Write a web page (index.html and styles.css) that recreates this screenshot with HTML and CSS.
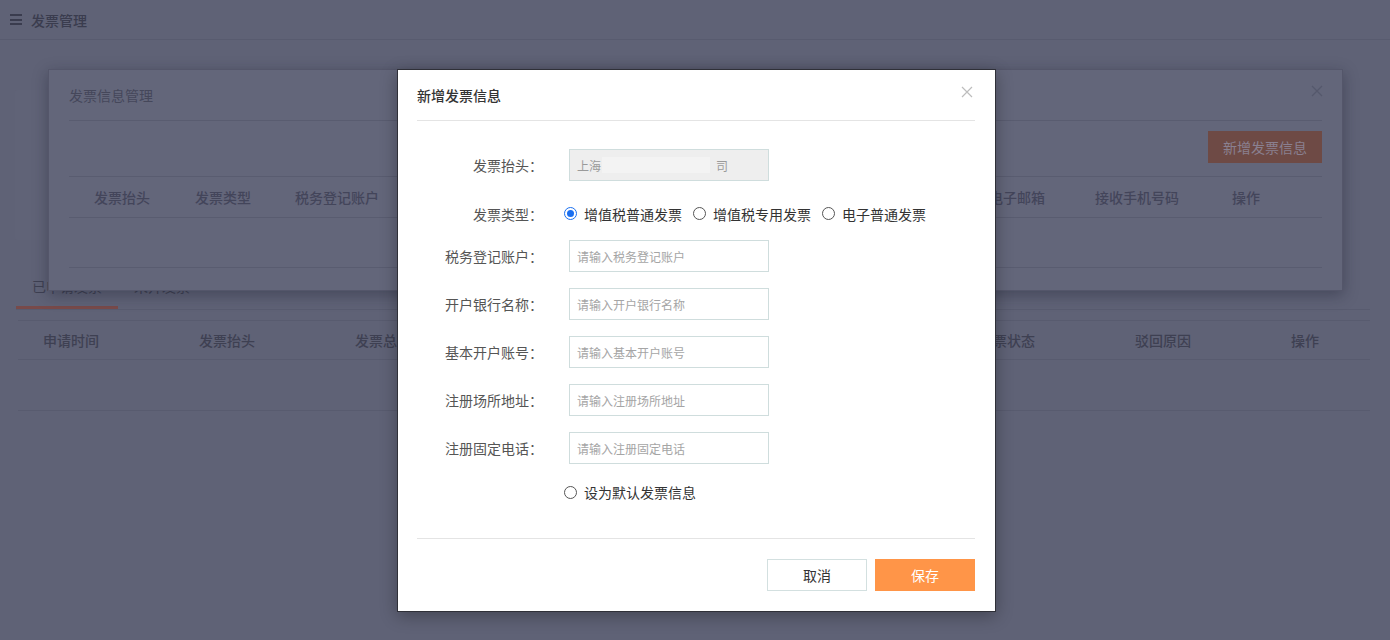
FILE: index.html
```html
<!DOCTYPE html>
<html lang="zh-CN">
<head>
    <meta charset="UTF-8">
    <title>发票管理</title>
    <link rel="stylesheet" href="styles.css">
</head>
<body>
    <div class="topbar">
        <span class="menu-icon"><i></i><i></i><i></i></span>
        <span class="topbar-title">发票管理</span>
    </div>

    <div class="main">
        <div class="summary-card"></div>

        <div class="tabs">
            <div class="tab active">已申请发票</div>
            <div class="tab">未开发票</div>
        </div>

        <div class="list">
            <div class="list-head">
                <div>申请时间</div>
                <div>发票抬头</div>
                <div>发票总额</div>
                <div>发票类型</div>
                <div>收票方式</div>
                <div>申请人</div>
                <div>发票状态</div>
                <div>驳回原因</div>
                <div>操作</div>
            </div>
            <div class="list-empty"></div>
        </div>
    </div>

    <!-- 发票信息管理 弹窗 -->
    <div class="info-dialog">
        <div class="info-head">
            <span>发票信息管理</span>
            <svg class="info-close" width="12" height="12" viewBox="0 0 12 12"><path d="M1 1L11 11M11 1L1 11" stroke="currentColor" stroke-width="1.2"/></svg>
        </div>
        <div class="info-tools">
            <button class="info-add">新增发票信息</button>
        </div>
        <div class="info-table">
            <div class="info-row info-row-head">
                <div class="c1">发票抬头</div>
                <div class="c2">发票类型</div>
                <div class="c3">税务登记账户</div>
                <div class="c4">开户银行名称</div>
                <div class="c5">基本开户账号</div>
                <div class="c6">注册场所地址</div>
                <div class="c7">接收电子邮箱</div>
                <div class="c8">接收手机号码</div>
                <div class="c9">操作</div>
            </div>
            <div class="info-row info-row-empty"></div>
        </div>
    </div>

    <!-- 新增发票信息 弹窗 -->
    <div class="dialog">
        <div class="dialog-head">
            <span class="dialog-title">新增发票信息</span>
            <svg class="dialog-close" width="12" height="12" viewBox="0 0 12 12"><path d="M1 1L11 11M11 1L1 11" stroke="currentColor" stroke-width="1.2"/></svg>
        </div>

        <div class="form">
            <div class="form-row">
                <label class="form-label">发票抬头：</label>
                <div class="input disabled">上海<span class="masked"></span>司</div>
            </div>
            <div class="form-row radio-row">
                <label class="form-label">发票类型：</label>
                <div class="radios">
                    <span class="radio checked"></span><span class="radio-text">增值税普通发票</span>
                    <span class="radio"></span><span class="radio-text">增值税专用发票</span>
                    <span class="radio"></span><span class="radio-text">电子普通发票</span>
                </div>
            </div>
            <div class="form-row">
                <label class="form-label">税务登记账户：</label>
                <input class="input" type="text" placeholder="请输入税务登记账户">
            </div>
            <div class="form-row">
                <label class="form-label">开户银行名称：</label>
                <input class="input" type="text" placeholder="请输入开户银行名称">
            </div>
            <div class="form-row">
                <label class="form-label">基本开户账号：</label>
                <input class="input" type="text" placeholder="请输入基本开户账号">
            </div>
            <div class="form-row">
                <label class="form-label">注册场所地址：</label>
                <input class="input" type="text" placeholder="请输入注册场所地址">
            </div>
            <div class="form-row">
                <label class="form-label">注册固定电话：</label>
                <input class="input" type="text" placeholder="请输入注册固定电话">
            </div>
            <div class="form-row default-row">
                <span class="radio"></span><span class="radio-text">设为默认发票信息</span>
            </div>
        </div>

        <div class="dialog-foot">
            <button class="btn btn-cancel">取消</button>
            <button class="btn btn-save">保存</button>
        </div>
    </div>
</body>
</html>
```

FILE: styles.css
```css
* {
    box-sizing: border-box;
}

body {
    margin: 0;
    height: 640px;
    overflow: hidden;
    background-color: #5f6276;
    font-family: "Noto Sans CJK SC", "Liberation Sans", sans-serif;
    font-size: 14px;
    color: #3e4052;
    position: relative;
}

/* ---- page behind the mask ---- */

.topbar {
    display: flex;
    align-items: center;
    height: 40px;
    padding: 0 10px;
    border-bottom: 1px solid #585b6f;
}

.menu-icon {
    display: flex;
    flex-direction: column;
    justify-content: space-between;
    width: 12px;
    height: 11px;
    margin-right: 9px;
}

.menu-icon i {
    display: block;
    height: 2px;
    background-color: #3a3c4e;
}

.topbar-title {
    color: #3a3c4e;
    font-weight: 500;
}

.main {
    padding: 50px 20px 0 15px;
}

.summary-card {
    height: 150px;
    margin-right: 40px;
    background-color: #606377;
    border-radius: 3px;
}

.tabs {
    display: flex;
    margin-top: 26px;
    margin-left: 1px;
    border-bottom: 1px solid #585b6f;
}

.tab {
    padding: 0 16px;
    line-height: 40px;
    border-bottom: 3px solid transparent;
    color: #3e4052;
}

.tab.active {
    border-bottom-color: #784a4a;
}

.list {
    margin: 10px 0 0 3px;
}

.list-head {
    display: grid;
    grid-template-columns: repeat(8, 156px) 1fr;
    height: 40px;
    align-items: center;
    border-top: 1px solid #585b6f;
    border-bottom: 1px solid #585b6f;
    font-weight: 500;
}

.list-head div {
    padding-left: 25px;
    white-space: nowrap;
}

.list-empty {
    height: 51px;
    border-bottom: 1px solid #585b6f;
}

/* ---- 发票信息管理 ---- */

.info-dialog {
    position: absolute;
    left: 48px;
    top: 69px;
    width: 1295px;
    height: 222px;
    padding: 0 20px;
    background-color: #63667a;
    border: 1px solid #54566a;
    box-shadow: 0 4px 14px rgba(20, 22, 40, 0.35);
}

.info-head {
    display: flex;
    justify-content: space-between;
    align-items: center;
    height: 51px;
    border-bottom: 1px solid #595c70;
    color: #45475a;
}

.info-close {
    color: #55586c;
    margin-right: -1px;
    margin-top: -8px;
}

.info-tools {
    display: flex;
    justify-content: flex-end;
    padding: 10px 0 13px;
}

.info-add {
    width: 114px;
    height: 32px;
    border: none;
    background-color: #6e4a45;
    color: #8a8090;
    font-family: inherit;
    font-size: 14px;
}

.info-row {
    display: flex;
    align-items: center;
    border-top: 1px solid #595c70;
}

.info-row-head {
    height: 41px;
    font-weight: 500;
    color: #43455a;
}

.info-row-empty {
    height: 51px;
    border-bottom: 1px solid #595c70;
}

.info-row div {
    text-align: center;
    white-space: nowrap;
    flex-shrink: 0;
}

.c1 { width: 106px; }
.c2 { width: 96px; }
.c3 { width: 132px; }
.c4 { width: 178px; }
.c5 { width: 178px; }
.c6 { width: 179px; }
.c7 { width: 130px; }
.c8 { width: 138px; }
.c9 { width: 80px; }

/* ---- 新增发票信息 ---- */

.dialog {
    position: absolute;
    left: 397px;
    top: 69px;
    width: 599px;
    height: 543px;
    padding: 0 20px 20px 19px;
    background-color: #fff;
    border: 1px solid #2f3038;
    box-shadow: 0 4px 16px rgba(0, 0, 0, 0.3);
    display: flex;
    flex-direction: column;
}

.dialog-head {
    display: flex;
    justify-content: space-between;
    align-items: center;
    height: 51px;
    border-bottom: 1px solid #e4e4e4;
}

.dialog-title {
    color: #333;
    font-weight: 500;
}

.dialog-close {
    color: #bdbdbd;
    margin-top: -7px;
    margin-right: 2px;
}

.form {
    padding-top: 28px;
    padding-bottom: 34px;
    border-bottom: 1px solid #e4e4e4;
}

.form-row {
    display: flex;
    align-items: center;
    height: 32px;
    margin-bottom: 16px;
}

.form-label {
    width: 126px;
    margin-right: 26px;
    text-align: right;
    color: #555;
    white-space: nowrap;
}

.input {
    width: 200px;
    height: 32px;
    padding: 0 7px;
    border: 1px solid #cfdddd;
    font-family: inherit;
    font-size: 12px;
    color: #333;
    outline: none;
}

.input::placeholder {
    color: #a5a5a5;
}

.input.disabled {
    display: flex;
    align-items: center;
    background-color: #eeeeee;
    color: #9a9a9a;
}

.masked {
    width: 108px;
    height: 16px;
    margin: 0 6px 0 1px;
    background-color: #f3f3f3;
}

.radio-row {
    height: 27px;
    padding-top: 6px;
}

.radios {
    display: flex;
    align-items: center;
    margin-left: -5px;
}

.radio {
    width: 13px;
    height: 13px;
    border: 1px solid #555;
    border-radius: 50%;
    position: relative;
    flex-shrink: 0;
}

.radio.checked {
    border-color: #1a6ff0;
}

.radio.checked::after {
    content: "";
    position: absolute;
    left: 2px;
    top: 2px;
    width: 7px;
    height: 7px;
    border-radius: 50%;
    background-color: #1a6ff0;
}

.radio-text {
    margin: 0 11px 0 7px;
    color: #333;
    white-space: nowrap;
}

.default-row {
    height: 24px;
    margin-bottom: 0;
    padding-left: 147px;
}

.dialog-foot {
    display: flex;
    justify-content: flex-end;
    gap: 8px;
    padding-top: 20px;
}

.btn {
    width: 100px;
    height: 32px;
    font-family: inherit;
    font-size: 14px;
    cursor: pointer;
}

.btn-cancel {
    background-color: #fff;
    border: 1px solid #d3e0e0;
    color: #333;
}

.btn-save {
    background-color: #ff9548;
    border: none;
    color: #fff;
}
```
